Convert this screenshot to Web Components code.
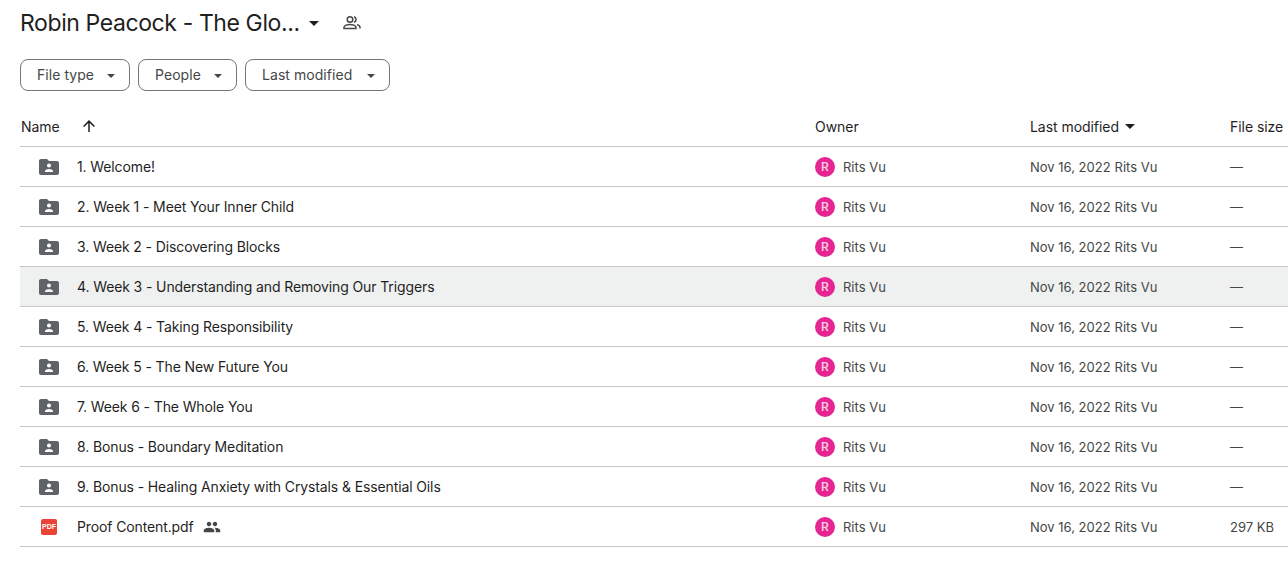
<!DOCTYPE html>
<html>
<head>
<meta charset="utf-8">
<title>Drive folder</title>
<style>
  html, body { margin: 0; background: #fff; }
  body { font-family: Inter, Roboto, "Liberation Sans", sans-serif; color: #1f1f1f; overflow: hidden; }
</style>
</head>
<body>
<drive-page></drive-page>
<script>
const FOLDER = `<svg width="24" height="24" viewBox="0 0 24 24" fill="#5f6368"><path d="M20 6h-8l-2-2H4c-1.1 0-1.99.9-1.99 2L2 18c0 1.1.9 2 2 2h16c1.1 0 2-.9 2-2V8c0-1.1-.9-2-2-2zm-8 2.5c1.1 0 2 .9 2 2s-.9 2-2 2-2-.9-2-2 .9-2 2-2zm4 8.5H8v-1c0-1.33 2.67-2 4-2s4 .67 4 2v1z" fill-rule="evenodd"/></svg>`;
const PEOPLE = `<svg width="18" height="18" viewBox="0 0 24 24" fill="#444746"><path d="M16 11c1.66 0 2.99-1.34 2.99-3S17.66 5 16 5c-1.66 0-3 1.34-3 3s1.34 3 3 3zm-8 0c1.66 0 2.99-1.34 2.99-3S9.66 5 8 5C6.34 5 5 6.34 5 8s1.34 3 3 3zm0 2c-2.33 0-7 1.17-7 3.5V19h14v-2.5c0-2.33-4.67-3.5-7-3.5zm8 0c-.29 0-.62.02-.97.05 1.16.84 1.97 1.97 1.97 3.45V19h6v-2.5c0-2.33-4.67-3.5-7-3.5z"/></svg>`;

class DriveChip extends HTMLElement {
  constructor() {
    super();
    this.attachShadow({ mode: "open" }).innerHTML = `
      <style>
        :host { display: inline-flex; align-items: center; box-sizing: border-box; height: 32px; padding: 0 14px 1px 16px; border: 1px solid #747775; border-radius: 8px; font-size: 14px; letter-spacing: .05px; color: #444746; }
        i { width: 0; height: 0; border: 4.5px solid transparent; border-top: 4.5px solid #444746; border-bottom: 0; margin: 2px 0 0 auto; }
      </style>
      <slot></slot><i></i>`;
  }
}
customElements.define("drive-chip", DriveChip);

class DriveHeader extends HTMLElement {
  constructor() {
    super();
    this.attachShadow({ mode: "open" }).innerHTML = `
      <style>
        :host { display: flex; flex-direction: column; padding-left: 20px; }
        .title { display: flex; align-items: center; height: 46px; }
        h1 { margin: 0; font: 400 23px/32px Inter, Roboto, sans-serif; letter-spacing: -.4px; color: #1f1f1f; width: 289px; white-space: nowrap; }
        .caret { width: 0; height: 0; border: 5px solid transparent; border-top: 5px solid #1f1f1f; border-bottom: 0; }
        svg { margin-left: 23px; }
        .chips { display: flex; gap: 8px; margin-top: 13px; }
      </style>
      <div class="title">
        <h1>Robin Peacock - The Glo...</h1><span class="caret"></span>
        <svg width="20" height="20" viewBox="0 0 20 20" fill="none" stroke="#444746" stroke-width="1.5"><circle cx="8" cy="6.5" r="2.8"/><path d="M2 15.5v-1.2c0-1.9 3.6-2.9 6-2.9s6 1 6 2.9v1.2z"/><path d="M12 3.8a2.8 2.8 0 0 1 0 5.4M15 11.6c1.8.5 3 1.4 3 2.7v1.2"/></svg>
      </div>
      <div class="chips"><drive-chip style="width:110px">File type</drive-chip><drive-chip style="width:99px">People</drive-chip><drive-chip style="width:145px">Last modified</drive-chip></div>`;
  }
}
customElements.define("drive-header", DriveHeader);

class DriveHead extends HTMLElement {
  constructor() {
    super();
    this.attachShadow({ mode: "open" }).innerHTML = `
      <style>
        :host { display: grid; grid-template-columns: 795px 215px 200px 1fr; align-items: center; height: 56px; padding-top: 15px; margin-left: 20px; border-bottom: 1px solid #c7c7c7; box-sizing: border-box; font-size: 14px; letter-spacing: -.05px; color: #1f1f1f; white-space: nowrap; }
        .n { display: flex; align-items: center; padding-left: 1px; }
        svg { margin-left: 19px; }
        .m { display: flex; align-items: center; gap: 6px; }
        .m i { width: 0; height: 0; border: 5px solid transparent; border-top: 5px solid #1f1f1f; border-bottom: 0; }
      </style>
      <div class="n"><span>Name</span><svg width="20" height="20" viewBox="0 0 20 20" fill="#1f1f1f"><path d="M9.25 16V6.9L5.1 11 4 10l6-6 6 6-1.1 1-4.15-4.1V16z"/></svg></div>
      <div>Owner</div>
      <div class="m"><span>Last modified</span><i></i></div>
      <div>File size</div>`;
  }
}
customElements.define("drive-head", DriveHead);

class DriveRow extends HTMLElement {
  constructor() {
    super();
    const pdf = this.hasAttribute("pdf");
    const icon = pdf
      ? `<span class="pdf">PDF</span>`
      : FOLDER;
    this.attachShadow({ mode: "open" }).innerHTML = `
      <style>
        :host { display: grid; grid-template-columns: 795px 215px 200px 1fr; align-items: center; height: 40px; margin-left: 20px; border-bottom: 1px solid #c7c7c7; box-sizing: border-box; font-size: 13px; color: #444746; white-space: nowrap; }
        :host([hover]) { background: #eff1f1; }
        .name { display: flex; align-items: center; color: #1f1f1f; font-size: 14px; letter-spacing: -.12px; }
        .ic { width: 24px; height: 24px; margin: 0 16px 0 17px; display: flex; align-items: center; justify-content: center; }
        .pdf { width: 16px; height: 16px; border-radius: 2px; background: #ea4335; color: #fff; font: 700 7px/16px "Liberation Sans", sans-serif; text-align: center; letter-spacing: 0; }
        .share { display: flex; margin-left: 9px; }
        .owner { display: flex; align-items: center; gap: 8px; }
        .av { width: 20px; height: 20px; border-radius: 50%; background: #e52592; color: #fbc8e2; font-size: 12px; font-weight: 600; line-height: 20px; text-align: center; }
        .mod { display: flex; gap: 4px; }
      </style>
      <div class="name"><span class="ic">${icon}</span><span>${this.getAttribute("name")}</span>${pdf ? `<span class="share">${PEOPLE}</span>` : ""}</div>
      <div class="owner"><span class="av">R</span><span>Rits Vu</span></div>
      <div class="mod"><span>Nov 16, 2022</span><span>Rits Vu</span></div>
      <div>${this.getAttribute("size") || "—"}</div>`;
  }
}
customElements.define("drive-row", DriveRow);

class DrivePage extends HTMLElement {
  constructor() {
    super();
    const rows = [
      "1. Welcome!",
      "2. Week 1 - Meet Your Inner Child",
      "3. Week 2 - Discovering Blocks",
      "4. Week 3 - Understanding and Removing Our Triggers",
      "5. Week 4 - Taking Responsibility",
      "6. Week 5 - The New Future You",
      "7. Week 6 - The Whole You",
      "8. Bonus - Boundary Meditation",
      "9. Bonus - Healing Anxiety with Crystals &amp; Essential Oils"
    ];
    this.attachShadow({ mode: "open" }).innerHTML = `
      <style>:host { display: block; height: 569px; overflow: hidden; }</style>
      <drive-header></drive-header>
      <drive-head></drive-head>
      ${rows.map((r, i) => `<drive-row name="${r}" ${i === 3 ? "hover" : ""}></drive-row>`).join("")}
      <drive-row pdf name="Proof Content.pdf" size="297 KB"></drive-row>`;
  }
}
customElements.define("drive-page", DrivePage);
</script>
</body>
</html>
